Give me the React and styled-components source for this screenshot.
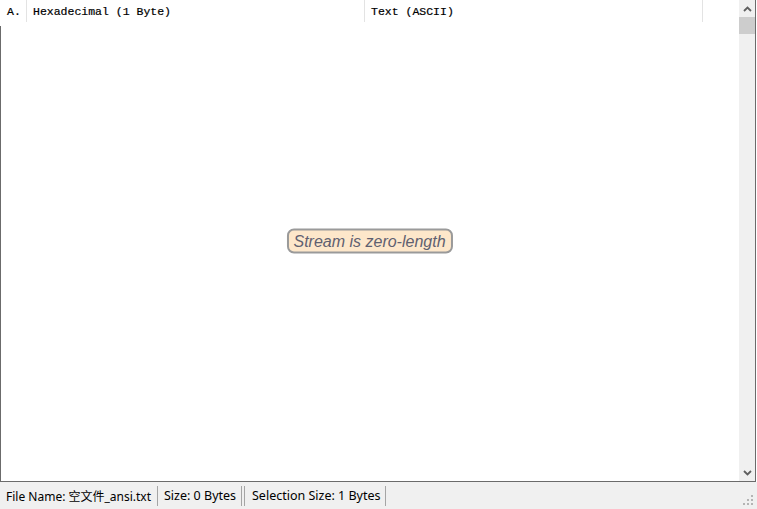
import React from 'react';
import styled, { createGlobalStyle } from 'styled-components';

const GlobalStyle = createGlobalStyle`
  html, body {
    margin: 0;
    padding: 0;
    background: #ffffff;
  }
`;

const Window = styled.div`
  width: 757px;
  height: 509px;
  display: flex;
  flex-direction: column;
  background: #ffffff;
  overflow: hidden;
`;

const Main = styled.div`
  display: flex;
  width: 755px;
  height: 481px;
  border-right: 1px solid #6b6b6b;
  border-bottom: 1px solid #6b6b6b;
  box-sizing: content-box;
`;

const HexPane = styled.div`
  position: relative;
  flex: 1;
  display: flex;
  flex-direction: column;
`;

const Header = styled.div`
  display: flex;
  height: 26px;
  font-family: "Liberation Mono", "Courier New", monospace;
  font-size: 11.5px;
  color: #000;
  -webkit-text-stroke: 0.2px #000;
`;

const HeaderCell = styled.div`
  width: ${p => p.$width}px;
  height: 22px;
  box-sizing: border-box;
  padding-left: ${p => p.$pad}px;
  padding-top: 5px;
  border-right: ${p => (p.$last ? 'none' : '1px solid #e3e3e3')};
  white-space: pre;
`;

const Body = styled.div`
  flex: 1;
  border-left: 1px solid #6b6b6b;
`;

const Notice = styled.div`
  position: absolute;
  left: 50%;
  top: 50%;
  transform: translate(-50%, -50%);
  padding: 2px 5px 2px 5px;
  background: #fde7ca;
  border: 2px solid #9a9a9a;
  border-radius: 7px;
  font-family: "Liberation Sans", Arial, sans-serif;
  font-style: italic;
  font-size: 16px;
  line-height: 17px;
  color: #5f6070;
  white-space: nowrap;
`;

const Scrollbar = styled.div`
  width: 16px;
  display: flex;
  flex-direction: column;
  background: #f0f0f0;
`;

const ArrowButton = styled.div`
  height: 17px;
  display: flex;
  align-items: center;
  justify-content: center;
`;

const Thumb = styled.div`
  height: 17px;
  background: #cdcdcd;
`;

const Track = styled.div`
  flex: 1;
`;

const StatusBar = styled.div`
  flex: 1;
  display: flex;
  align-items: center;
  background: #f0f0f0;
  font-family: "Segoe UI", "Noto Sans", "Noto Sans CJK SC", sans-serif;
  color: #000;
`;

const Pane = styled.div`
  width: ${p => p.$width}px;
  box-sizing: border-box;
  padding-left: ${p => p.$left}px;
  font-size: ${p => p.$size || 12.5}px;
  white-space: nowrap;
  overflow: hidden;
`;

const Divider = styled.div`
  width: 1px;
  height: 20px;
  background: #a5a5a5;
  margin-right: ${p => p.$gap || 0}px;
`;

const Grip = styled.svg`
  margin-left: auto;
  margin-right: 4px;
  align-self: flex-end;
  margin-bottom: 4px;
`;

const Chevron = ({ down }) => (
  <svg width="9" height="6" viewBox="0 0 9 6">
    <polyline
      points={down ? '1,1 4.5,4.5 8,1' : '1,5 4.5,1.5 8,5'}
      fill="none"
      stroke="#5f5f5f"
      strokeWidth="1.8"
    />
  </svg>
);

const gripDots = [
  [8, 0], [8, 4], [4, 4], [8, 8], [4, 8], [0, 8],
];

const App = () => {
  return (
    <Window>
      <GlobalStyle />
      <Main>
        <HexPane>
          <Header>
            <HeaderCell $width={27} $pad={7}>A.</HeaderCell>
            <HeaderCell $width={338} $pad={6}>Hexadecimal (1 Byte)</HeaderCell>
            <HeaderCell $width={338} $pad={6}>Text (ASCII)</HeaderCell>
            <HeaderCell $width={36} $pad={0} $last />
          </Header>
          <Body />
          <Notice>Stream is zero-length</Notice>
        </HexPane>
        <Scrollbar>
          <ArrowButton><Chevron /></ArrowButton>
          <Thumb />
          <Track />
          <ArrowButton><Chevron down /></ArrowButton>
        </Scrollbar>
      </Main>
      <StatusBar>
        <Pane $width={157} $left={6} $size={12}>File Name: 空文件_ansi.txt</Pane>
        <Divider />
        <Pane $width={83} $left={6}>Size: 0 Bytes</Pane>
        <Divider $gap={2} />
        <Divider />
        <Pane $width={140} $left={7}>Selection Size: 1 Bytes</Pane>
        <Divider />
        <Grip width="10" height="10" viewBox="0 0 10 10">
          {gripDots.map(([x, y]) => (
            <rect key={`${x}-${y}`} x={x} y={y} width="2" height="2" fill="#b4b4b4" />
          ))}
        </Grip>
      </StatusBar>
    </Window>
  );
};

export default App;
